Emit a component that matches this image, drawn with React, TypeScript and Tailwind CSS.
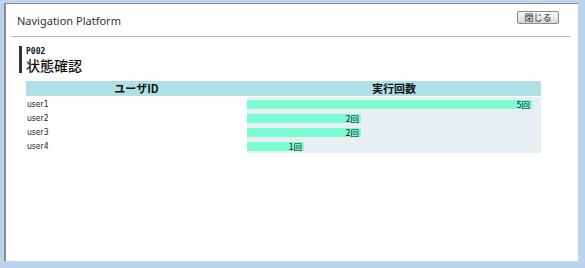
import React from "react";

const rows = [
  { id: "user1", n: 5 },
  { id: "user2", n: 2 },
  { id: "user3", n: 2 },
  { id: "user4", n: 1 },
];

export default function App() {
  return (
    <div
      className="w-[585px] h-[268px] bg-[#bcd3ec] pl-[4px] pr-[7px] pt-[3px] pb-[7px]"
      style={{ fontFamily: '"Noto Sans", "Noto Sans CJK JP", sans-serif' }}
    >
      <div className="h-full bg-white border-l-2 border-t border-[#8c8c8c] flex flex-col">
        <div className="ml-[6px] mr-[8px] h-[33px] border-b border-[#b4b4b4] flex items-center justify-between pl-[5px] pr-[11px]">
          <span className="text-[11px] text-[#333] leading-none pt-[1px]">Navigation Platform</span>
          <button className="w-[42px] h-[13px] mb-[5px] border border-[#8a8a8a] rounded-[2px] bg-gradient-to-b from-[#fafafa] to-[#d8d8d8] text-[9px] leading-none text-[#222] flex items-center justify-center" style={{ fontFamily: '"Noto Sans CJK JP", sans-serif' }}>
            閉じる
          </button>
        </div>
        <div className="pl-[13px] pt-[9px] flex">
          <div className="w-[3px] h-[27px] bg-[#333]" />
          <div className="pl-[4px] flex flex-col" style={{ fontFamily: '"Noto Sans CJK JP", sans-serif' }}>
            <span className="text-[8px] font-bold leading-[10px] text-[#111] mt-[1px]" style={{ fontFamily: '"DejaVu Sans Mono", monospace' }}>P002</span>
            <span className="text-[14px] font-medium leading-[16px] text-[#111]">状態確認</span>
          </div>
        </div>
        <div className="pl-[20px] pt-[8px]">
          <div className="w-[515px]" style={{ fontFamily: '"Noto Sans CJK JP", sans-serif' }}>
            <div className="flex h-[15px] bg-[#b0e0e6] text-[11px] font-bold text-[#111] leading-none items-center">
              <div className="w-[221px] text-center">ユーザID</div>
              <div className="flex-1 text-center">実行回数</div>
            </div>
            <div className="pt-[1px] flex flex-col">
              {rows.map((r) => (
                <div key={r.id} className="flex h-[14px]">
                  <div className="w-[221px] pl-[1px] flex items-center pt-[1px] text-[8.5px] text-[#222] leading-none" style={{ fontFamily: '"DejaVu Sans Condensed", "Noto Sans CJK JP", sans-serif' }}>
                    {r.id}
                  </div>
                  <div className="flex-1 bg-[#e7eff3] flex items-center pt-[1px]">
                    <div
                      className="h-[9px] bg-[#7dfcd2] flex items-center justify-end pr-[2px] text-[8.5px] leading-none text-[#111]"
                      style={{ width: `${r.n * 57}px` }}
                    >
                      {r.n}回
                    </div>
                  </div>
                </div>
              ))}
            </div>
          </div>
        </div>
      </div>
    </div>
  );
}
